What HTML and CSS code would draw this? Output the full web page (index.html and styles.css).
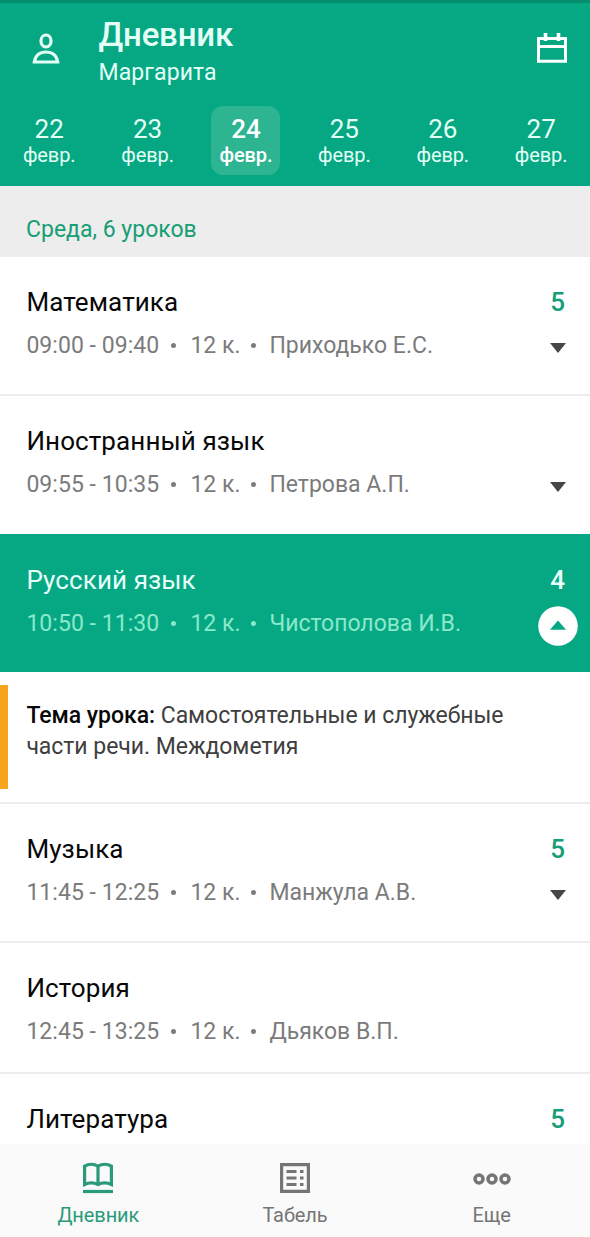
FILE: index.html
```html
<!DOCTYPE html>
<html lang="ru">
<head>
<meta charset="utf-8">
<meta name="viewport" content="width=device-width, initial-scale=1">
<title>Дневник</title>
<link rel="stylesheet" href="styles.css">
</head>
<body>
<div class="app">
  <header class="header">
    <div class="topbar">
      <svg class="profile-icon" width="28" height="32" viewBox="0 0 28 32" fill="none" stroke="currentColor" stroke-width="3.2"><ellipse cx="14" cy="8" rx="5" ry="6"/><path d="M2.300 29C3.200 22.400 7.800 19 14 19s10.800 3.400 11.700 10z"/></svg>
      <div class="heading">
        <h1 class="title">Дневник</h1>
        <p class="student">Маргарита</p>
      </div>
      <svg class="calendar-icon" width="30" height="30" viewBox="0 0 30 30" fill="none" stroke="currentColor" stroke-width="3"><path d="M1.5 5.5h27v22.8h-27z"/><path d="M1.5 13.5h27"/><path d="M8.5 0v8M21.5 0v8" stroke-width="3.6"/></svg>
    </div>
    <nav class="days">
      <div class="day"><span class="date">22</span><span class="month">февр.</span></div>
      <div class="day"><span class="date">23</span><span class="month">февр.</span></div>
      <div class="day selected"><span class="date">24</span><span class="month">февр.</span></div>
      <div class="day"><span class="date">25</span><span class="month">февр.</span></div>
      <div class="day"><span class="date">26</span><span class="month">февр.</span></div>
      <div class="day"><span class="date">27</span><span class="month">февр.</span></div>
    </nav>
  </header>
  <div class="summary"><span>Среда, 6 уроков</span></div>
  <main class="lessons">
    <section class="lesson">
      <div class="line"><h2 class="subject">Математика</h2><span class="grade">5</span></div>
      <div class="meta"><span class="time">09:00 - 09:40</span><i class="dot"></i><span>12 к.</span><i class="dot"></i><span class="teacher">Приходько Е.С.</span><svg class="arrow" width="16" height="10" viewBox="0 0 16 10"><path d="M0 0h16L8 10z" fill="currentColor"/></svg></div>
    </section>
    <section class="lesson before-open">
      <div class="line"><h2 class="subject">Иностранный язык</h2></div>
      <div class="meta"><span class="time">09:55 - 10:35</span><i class="dot"></i><span>12 к.</span><i class="dot"></i><span class="teacher">Петрова А.П.</span><svg class="arrow" width="16" height="10" viewBox="0 0 16 10"><path d="M0 0h16L8 10z" fill="currentColor"/></svg></div>
    </section>
    <section class="lesson open">
      <div class="line"><h2 class="subject">Русский язык</h2><span class="grade">4</span></div>
      <div class="meta"><span class="time">10:50 - 11:30</span><i class="dot"></i><span>12 к.</span><i class="dot"></i><span class="teacher">Чистополова И.В.</span><svg class="arrow toggle" width="40" height="40" viewBox="0 0 40 40"><circle cx="20" cy="20" r="19.8" fill="#fff"/><path d="M12 23.8h16L20 14.5z" fill="#05a883"/></svg></div>
    </section>
    <section class="topic">
      <p class="topic-text"><b class="topic-label">Тема урока:</b> Самостоятельные и служебные<br>части речи. Междометия</p>
    </section>
    <section class="lesson">
      <div class="line"><h2 class="subject">Музыка</h2><span class="grade">5</span></div>
      <div class="meta"><span class="time">11:45 - 12:25</span><i class="dot"></i><span>12 к.</span><i class="dot"></i><span class="teacher">Манжула А.В.</span><svg class="arrow" width="16" height="10" viewBox="0 0 16 10"><path d="M0 0h16L8 10z" fill="currentColor"/></svg></div>
    </section>
    <section class="lesson short">
      <div class="line"><h2 class="subject">История</h2></div>
      <div class="meta"><span class="time">12:45 - 13:25</span><i class="dot"></i><span>12 к.</span><i class="dot"></i><span class="teacher">Дьяков В.П.</span></div>
    </section>
    <section class="lesson clipped">
      <div class="line"><h2 class="subject">Литература</h2><span class="grade">5</span></div>
    </section>
  </main>
  <footer class="tabs">
    <div class="tab active">
      <svg width="30" height="32" viewBox="0 0 30 32" fill="none" stroke="currentColor" stroke-width="3.2"><path d="M1.600 22.500V4.200C5.500 1.800 11 1.800 15 4.200c4-2.400 9.500-2.400 13.400 0v18.300c-4-2-9.400-2-13.400 0-4-2-9.400-2-13.400 0zM15 4v18.500"/><path d="M0 29.500h30"/></svg>
      <span class="tab-label">Дневник</span>
    </div>
    <div class="tab report">
      <svg width="30" height="32" viewBox="0 0 30 32" fill="none" stroke="currentColor" stroke-width="3.2"><path d="M1.600 2.600h26.800v26.800h-26.800z"/><path d="M6.500 9.500h10M6.500 16h10M6.500 22.500h10M20 9.500h3.500M20 16h3.500M20 22.500h3.500"/></svg>
      <span class="tab-label">Табель</span>
    </div>
    <div class="tab more">
      <svg width="38" height="32" viewBox="0 0 38 32" fill="none" stroke="currentColor" stroke-width="3.500"><circle cx="6" cy="17" r="4"/><circle cx="19" cy="17" r="4"/><circle cx="32" cy="17" r="4"/></svg>
      <span class="tab-label">Еще</span>
    </div>
  </footer>
</div>
</body>
</html>
```
FILE: styles.css
```css
* { box-sizing: border-box; margin: 0; padding: 0; }
body { background: #fff; font-family: Roboto, "Noto Sans", sans-serif; }
.app { display: flex; flex-direction: column; width: 590px; height: 1237px; overflow: hidden; }
svg { display: block; flex: none; }

.header { height: 186px; flex: none; background: #05a883; border-top: 3px solid #058d6e; color: #e3fff6; }
.topbar { display: flex; height: 103px; padding: 0 23.5px 0 32px; }
.profile-icon { margin-top: 30px; }
.calendar-icon { margin: 30px 0 0 auto; color: #fff; }
.heading { margin-left: 38.5px; padding-top: 12px; }
.title { font-size: 33px; line-height: 40px; font-weight: 500; letter-spacing: -0.2px; }
.student { font-size: 23px; line-height: 28px; padding-top: 4px; letter-spacing: 0.1px; }
.days { display: grid; grid-template-columns: repeat(6, 98.4px); }
.day { display: flex; flex-direction: column; align-items: center; justify-self: center; width: 69px; height: 69px; padding-top: 7px; border-radius: 12px; }
.day.selected { background: #2db591; font-weight: 500; color: #fff; }
.date { font-size: 26px; line-height: 32px; }
.month { font-size: 20px; line-height: 20px; letter-spacing: -0.1px; }

.summary { height: 71px; flex: none; background: #ededed; padding: 30px 26px 0; font-size: 23px; line-height: 28px; color: #169e74; }

.lessons { flex: 1; overflow: hidden; }
.lesson { height: 139px; padding: 29px 25px 0 26.4px; border-bottom: 2px solid #ededed; }
.line { display: flex; justify-content: space-between; height: 32px; }
.subject { font-size: 26px; line-height: 32px; font-weight: 400; color: #080808; letter-spacing: 0.1px; }
.grade { font-size: 26px; line-height: 32px; font-weight: 500; color: #169e74; }
.meta { display: grid; grid-template: 32px / 145px 19px 61px 18px 1fr auto; align-items: center; margin-top: 12px; font-size: 23px; line-height: 32px; color: #7b7b7b; white-space: nowrap; }
.time { letter-spacing: 0.04px; }
.dot { width: 5px; height: 5px; margin-bottom: 2px; border-radius: 50%; background: currentColor; }
.arrow { color: #464646; margin: 4px -1px 0 0; }
.before-open, .open { height: 138px; border: 0; }
.open { background: #05a883; padding-top: 30px; }
.open .subject, .open .grade { color: #e8fffa; }
.open .meta { color: #8be8ca; }
.open .toggle { align-self: start; margin: -2px -13px 0 0; }
.short { height: 131px; }
.clipped { border: 0; }

.topic { height: 132px; padding-top: 13px; border-bottom: 2px solid #ededed; }
.topic-text { height: 104px; border-left: 8px solid #f7a51c; padding: 15px 18.4px; font-size: 23px; line-height: 31px; letter-spacing: -0.04px; color: #3e3e3e; }
.topic-label { font-weight: 500; color: #080808; }

.tabs { display: grid; grid-template-columns: repeat(3, 1fr); flex: none; height: 93px; background: #fafafa; color: #757575; }
.tab { display: flex; flex-direction: column; align-items: center; padding-top: 18px; }
.tab-label { font-size: 20px; line-height: 24px; margin-top: 9px; letter-spacing: -0.1px; }
.active { color: #2b9a7a; }
```
